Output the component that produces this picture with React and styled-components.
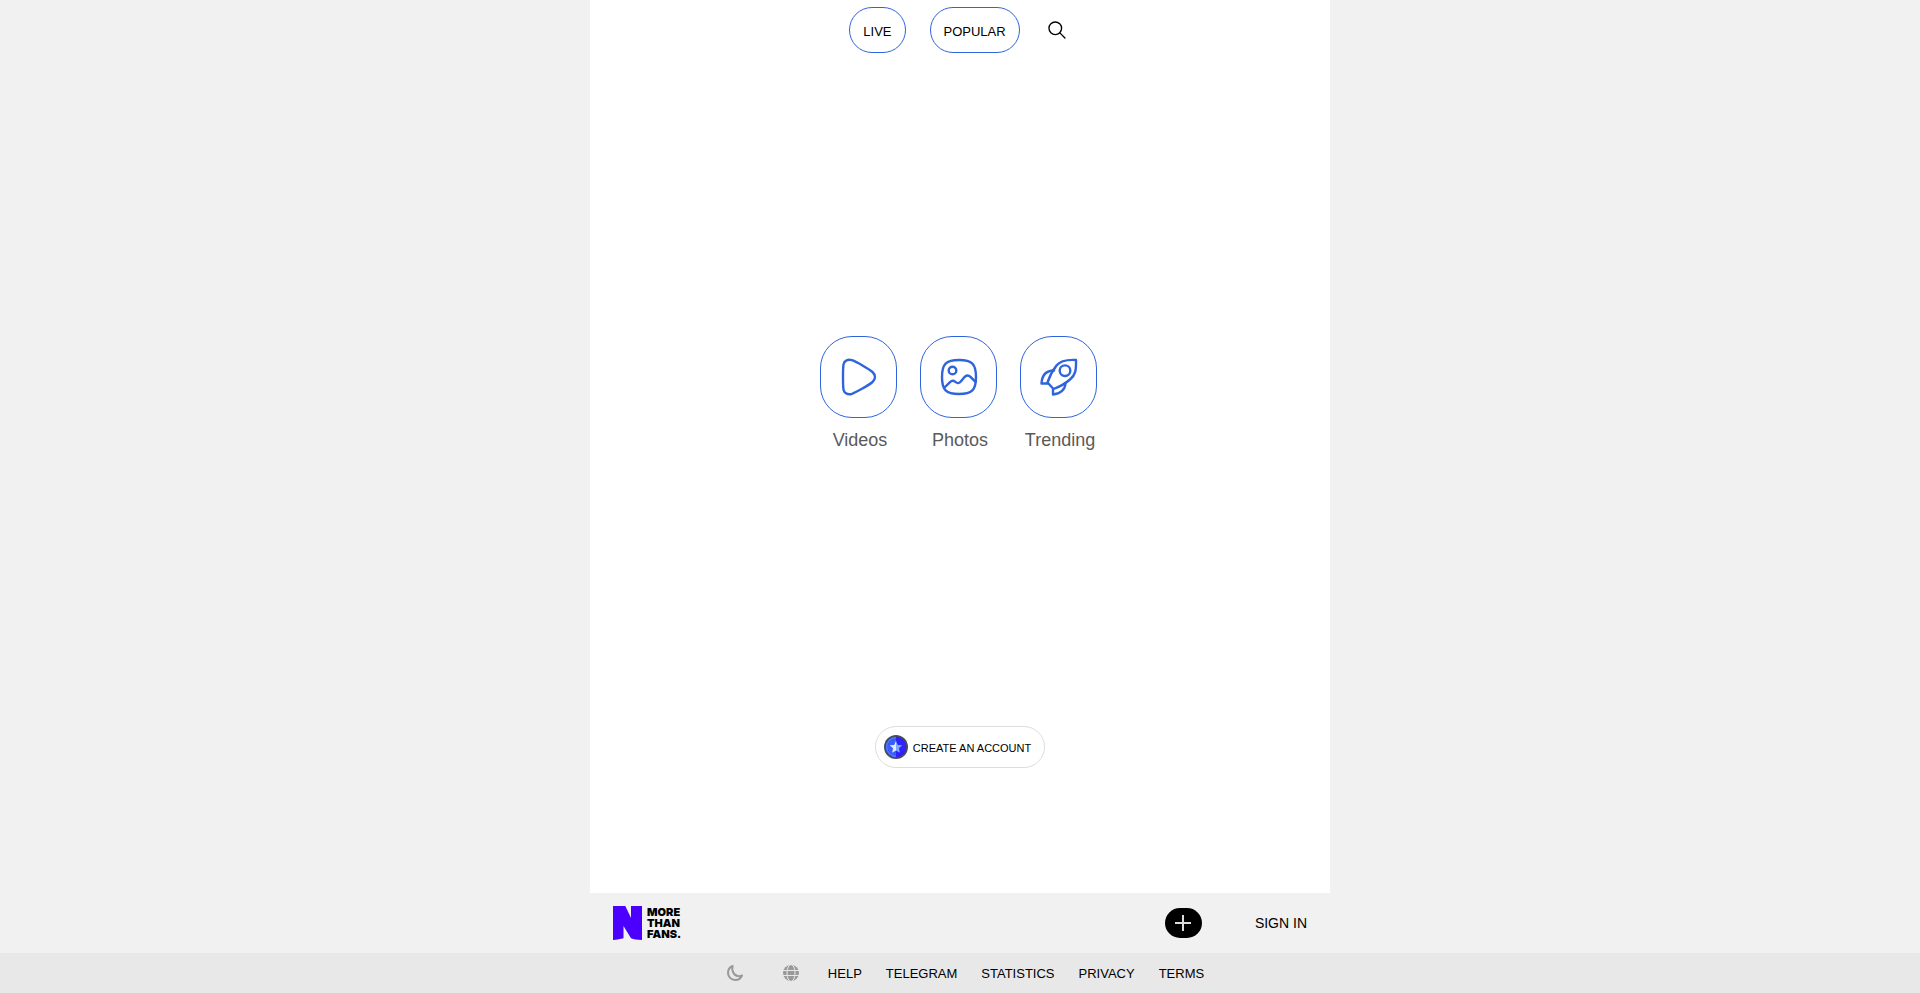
import React from "react"
import styled, { createGlobalStyle } from "styled-components"

const GlobalStyle = createGlobalStyle`
  :root {
    --blue: #2f64dc;
    --page: #f1f1f1;
    --limit: 740px;
  }
  * {
    box-sizing: border-box;
  }
  body {
    margin: 0;
    background: var(--page);
    color: #000;
    font-family: "Liberation Sans", Arial, sans-serif;
  }
  a {
    color: inherit;
    text-decoration: none;
  }
  button {
    border: 0;
    padding: 0;
    background: none;
    color: inherit;
    font: inherit;
    cursor: pointer;
  }
  svg {
    display: block;
  }
`

const Page = styled.div`
  min-height: 100vh;
  display: flex;
  flex-direction: column;
`

const Main = styled.main`
  flex: 1;
  width: 100%;
  max-width: var(--limit);
  margin: 0 auto;
  background: #fff;
  display: flex;
  flex-direction: column;
  align-items: center;
`

const Header = styled.header`
  display: flex;
  align-items: center;
  gap: 24px;
  padding-top: 7px;
`

const Pill = styled.a`
  display: flex;
  align-items: center;
  height: 46px;
  padding: 3px 13px 0;
  border: 1px solid var(--blue);
  border-radius: 23px;
  font-size: 13px;
  line-height: 16px;
`

const SearchButton = styled.button`
  display: flex;
  justify-content: center;
  width: 27px;
`

const Tiles = styled.nav`
  flex: 1;
  display: flex;
  align-items: center;
  gap: 23px;
  padding: 6px 3px 0 0;
`

const Tile = styled.a`
  display: flex;
  flex-direction: column;
  align-items: center;
  width: 77px;
  color: #5a5a5a;
  font-size: 18px;
  line-height: 20px;
`

const TileIcon = styled.span`
  display: flex;
  align-items: center;
  justify-content: center;
  width: 100%;
  height: 82px;
  margin-bottom: 12px;
  border: 1px solid var(--blue);
  border-radius: 32px;
  color: var(--blue);
`

const TileLabel = styled.span`
  padding-left: 3px;
`

const CreateAccount = styled.a`
  display: flex;
  align-items: center;
  gap: 5px;
  height: 42px;
  margin-bottom: 125px;
  padding: 0 13px 0 8px;
  border: 1px solid #ddd;
  border-radius: 21px;
  font-size: 11px;
  line-height: 14px;
`

const CreateLabel = styled.span`
  padding-top: 2px;
`

const Bar = styled.div`
  display: flex;
  align-items: center;
  width: 100%;
  max-width: var(--limit);
  height: 60px;
  margin: 0 auto;
  padding: 0 23px;
`

const Logo = styled.a`
  display: flex;
  align-items: center;
  gap: 5px;
  margin-right: auto;
  font: 900 11px/11px Inter, sans-serif;
`

const LogoText = styled.span`
  display: flex;
  flex-direction: column;
`

const AddButton = styled.button`
  display: flex;
  align-items: center;
  justify-content: center;
  width: 37px;
  height: 30px;
  margin-right: 53px;
  border-radius: 15px;
  background: #000;
  color: #ddd;
`

const SignIn = styled.a`
  font-size: 14px;
  line-height: 16px;
`

const Footer = styled.footer`
  display: flex;
  align-items: center;
  justify-content: center;
  gap: 18px;
  height: 40px;
  background: #e8e8e8;
`

const FooterButton = styled.button`
  display: flex;
  justify-content: center;
  width: 38px;
  color: #999;
`

const Links = styled.nav`
  display: flex;
  gap: 24px;
  padding-top: 2px;
  font-size: 13px;
  line-height: 16px;
`

const stroke = {
  fill: "none",
  stroke: "currentColor",
  strokeLinecap: "round",
  strokeLinejoin: "round",
}

const SearchIcon = () => (
  <svg width="18" height="18" viewBox="0 0 20 20" {...stroke} strokeWidth="1.5">
    <circle cx="8.1" cy="8.1" r="7" />
    <path d="M13.2 13.2l5.6 5.6" />
  </svg>
)

const VideoIcon = () => (
  <svg width="38" height="38" viewBox="0 0 38 38" {...stroke} strokeWidth="2.4">
    <path d="M3 19c0-6 0-10.5.6-13C4.3 2.5 8 .9 12 2.2c4.5 1.6 16.5 8.4 20.500 11.8 3.300 3 3.300 7 0 10-4 3.400-16 10.200-20.500 11.800-4 1.300-7.700-.3-8.400-3.800C3 29.500 3 25 3 19z" />
  </svg>
)

const PhotoIcon = () => (
  <svg width="38" height="38" viewBox="0 0 38 38" {...stroke} strokeWidth="2.4">
    <path d="M2 19C2 6 6 2 19 2s17 4 17 17-4 17-17 17S2 32 2 19z" />
    <circle cx="12.5" cy="12.5" r="3.8" />
    <path d="M4.500 29.500l5.500-5.300c1.900-1.800 3.500-1.800 5.300-.3 2.200 1.800 3.900 1.600 5.700-.6l3.300-4c2-2.300 4.200-2.400 6.200-.4l5 5" />
  </svg>
)

const RocketIcon = () => (
  <svg width="38" height="38" viewBox="0 0 38 38" {...stroke} strokeWidth="2.4">
    <path d="M36 2C26 1.500 20 3 16.500 7.500 13 12 9.500 18.500 7.500 24.500l6 6.500c6-2.300 12-5.500 16.500-9.500C35.500 17 36.300 12 36 2z" />
    <circle cx="25" cy="12.7" r="5.3" />
    <path d="M14 12.500C6.500 12.500 2 17 1.500 25.500h6M13 31v5.500C20.500 36 25.500 31 25.500 25" />
  </svg>
)

const StarBadge = () => (
  <svg width="24" height="24" viewBox="0 0 24 24">
    <circle cx="12" cy="12" r="12" fill="#454c5c" />
    <circle cx="12" cy="12" r="10.3" fill="#3320f5" />
    <path d="M12 1.700a10.300 10.300 0 0 0 0 20.600z" fill="#4278fa" />
    <circle cx="12" cy="12" r="8.3" fill="#2f22ff" />
    <path d="M12 3.700a8.300 8.300 0 0 0 0 16.600z" fill="#3d5cfa" />
    <path d="M12 5.800l1.800 4.100 4.500.4-3.400 3 1 4.400-3.900-2.300z" fill="#7fa8ff" />
    <path d="M12 5.800l-1.800 4.100-4.500.4 3.400 3-1 4.400 3.900-2.300z" fill="#dcecff" />
  </svg>
)

const LogoMark = () => (
  <svg width="29" height="34" viewBox="0 0 29 34" fill="#4b00ff">
    <path d="M0 0h12.300l5.700 12V0h11v34c-5-.2-8-.8-11-1.800L10.500 20v12.200C7.500 33 4 33.700 0 34z" />
  </svg>
)

const PlusIcon = () => (
  <svg width="16" height="16" viewBox="0 0 16 16" {...stroke} strokeWidth="2" strokeLinecap="butt">
    <path d="M8 0v16M0 8h16" />
  </svg>
)

const MoonIcon = () => (
  <svg width="16" height="16" viewBox="0 0 16 16" {...stroke} strokeWidth="2">
    <path d="M5.600 1C2.800 2.200 1 4.700 1 7.700 1 11.800 4.200 15 8.200 15c3.200 0 5.800-1.900 6.800-4.600-1.200.7-2.600 1-3.900.7C6.700 10.500 4.400 5.300 5.600 1z" />
  </svg>
)

const GlobeIcon = () => (
  <svg width="16" height="16" viewBox="0 0 16 16">
    <circle cx="8" cy="8" r="8" fill="currentColor" />
    <g fill="none" stroke="#e8e8e8" strokeWidth="1">
      <path d="M0 5.500h16M0 10.500h16" />
      <ellipse cx="8" cy="8" rx="4" ry="8.5" />
    </g>
  </svg>
)

const tiles = [
  { label: "Videos", Icon: VideoIcon },
  { label: "Photos", Icon: PhotoIcon },
  { label: "Trending", Icon: RocketIcon },
]

const links = ["HELP", "TELEGRAM", "STATISTICS", "PRIVACY", "TERMS"]

const App = () => (
  <Page>
    <GlobalStyle />
    <Main>
      <Header>
        <Pill href="#live">LIVE</Pill>
        <Pill href="#popular">POPULAR</Pill>
        <SearchButton aria-label="Search">
          <SearchIcon />
        </SearchButton>
      </Header>
      <Tiles>
        {tiles.map(({ label, Icon }) => (
          <Tile href={`#${label.toLowerCase()}`} key={label}>
            <TileIcon>
              <Icon />
            </TileIcon>
            <TileLabel>{label}</TileLabel>
          </Tile>
        ))}
      </Tiles>
      <CreateAccount href="#register">
        <StarBadge />
        <CreateLabel>CREATE AN ACCOUNT</CreateLabel>
      </CreateAccount>
    </Main>
    <Bar>
      <Logo href="#home">
        <LogoMark />
        <LogoText>
          <span>MORE</span>
          <span>THAN</span>
          <span>FANS.</span>
        </LogoText>
      </Logo>
      <AddButton aria-label="Add">
        <PlusIcon />
      </AddButton>
      <SignIn href="#login">SIGN IN</SignIn>
    </Bar>
    <Footer>
      <FooterButton aria-label="Dark mode">
        <MoonIcon />
      </FooterButton>
      <FooterButton aria-label="Language">
        <GlobeIcon />
      </FooterButton>
      <Links>
        {links.map(link => (
          <a href={`#${link.toLowerCase()}`} key={link}>
            {link}
          </a>
        ))}
      </Links>
    </Footer>
  </Page>
)

export default App
